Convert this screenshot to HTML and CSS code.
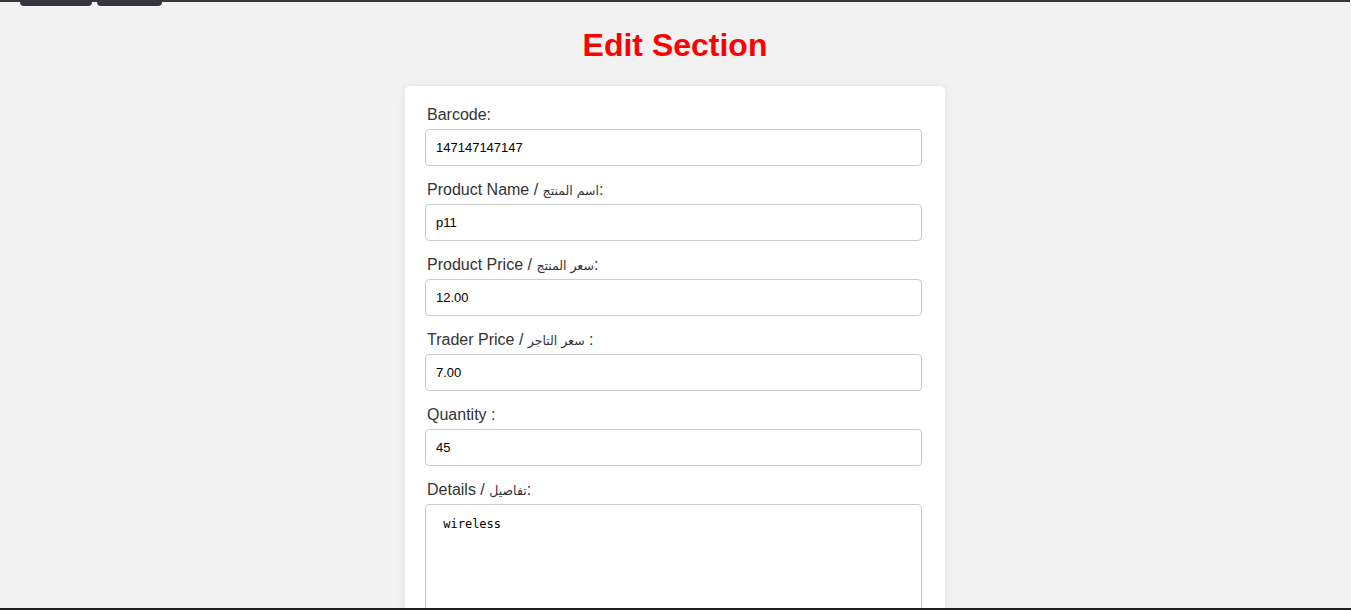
FILE: index.html
```html
<!DOCTYPE html>
<html lang="en">
<head>
<meta charset="utf-8">
<title>Edit Section</title>
<link rel="stylesheet" href="styles.css">
</head>
<body>
<nav class="topbar">
  <a class="nav-btn nav-btn-1" href="#"></a>
  <a class="nav-btn nav-btn-2" href="#"></a>
</nav>
<h1 class="title">Edit Section</h1>
<form class="card">
  <label class="field-label" for="barcode">Barcode:</label>
  <input class="field-input" id="barcode" type="text" value="147147147147">

  <label class="field-label" for="name">Product Name / <span class="ar" dir="rtl">اسم المنتج</span>:</label>
  <input class="field-input" id="name" type="text" value="p11">

  <label class="field-label" for="price">Product Price / <span class="ar" dir="rtl">سعر المنتج</span>:</label>
  <input class="field-input" id="price" type="text" value="12.00">

  <label class="field-label" for="trader">Trader Price / <span class="ar" dir="rtl">سعر التاجر</span> :</label>
  <input class="field-input" id="trader" type="text" value="7.00">

  <label class="field-label" for="qty">Quantity :</label>
  <input class="field-input" id="qty" type="text" value="45">

  <label class="field-label" for="details">Details / <span class="ar" dir="rtl">تفاصيل</span>:</label>
  <textarea class="field-textarea" id="details"> wireless</textarea>
</form>
<div class="bottom-edge"></div>
</body>
</html>
```

FILE: styles.css
```css
html {
  overflow: hidden;
}

body {
  margin: 0;
  padding-right: 1px;
  background: #f2f2f2;
  font-family: "Liberation Sans", Arial, "DejaVu Sans", sans-serif;
  color: #333;
}

.topbar {
  display: flex;
  gap: 5px;
  padding-left: 20px;
  border-top: 2px solid #37363f;
  height: 4px;
}

.nav-btn {
  display: block;
  height: 4px;
  background: #35343d;
  border-radius: 0 0 5px 5px;
}

.nav-btn-1 {
  width: 72px;
}

.nav-btn-2 {
  width: 65px;
}

.title {
  margin: 21px 0 22px;
  text-align: center;
  color: #ff0000;
  font-size: 32px;
  font-weight: bold;
  line-height: 37px;
}

.card {
  width: 500px;
  margin: 0 auto;
  padding: 20px;
  background: #fff;
  border-radius: 5px;
  box-shadow: 0 0 8px rgba(0, 0, 0, 0.08);
  display: flex;
  flex-direction: column;
}

.field-label {
  display: block;
  height: 18px;
  font-size: 16px;
  line-height: 18px;
  margin: 0 0 5px 2px;
  color: #333;
}

.ar {
  font-family: "DejaVu Sans", sans-serif;
  font-size: 12.5px;
  line-height: 1;
}

.field-input,
.field-textarea {
  box-sizing: border-box;
  width: 497px;
  margin: 0 0 15px;
  padding: 10px;
  border: 1px solid #ccc;
  border-radius: 4px;
  background: #fff;
  color: #000;
}

.field-input {
  height: 37px;
  font-family: "Liberation Sans", Arial, sans-serif;
  font-size: 13px;
}

.field-textarea {
  height: 150px;
  resize: vertical;
  padding-top: 12px;
  font-family: "DejaVu Sans Mono", "Liberation Mono", monospace;
  font-size: 12px;
  line-height: 15px;
}

.bottom-edge {
  position: fixed;
  left: 0;
  right: 0;
  bottom: 0;
  height: 2px;
  background: #1f1f1f;
}
```
